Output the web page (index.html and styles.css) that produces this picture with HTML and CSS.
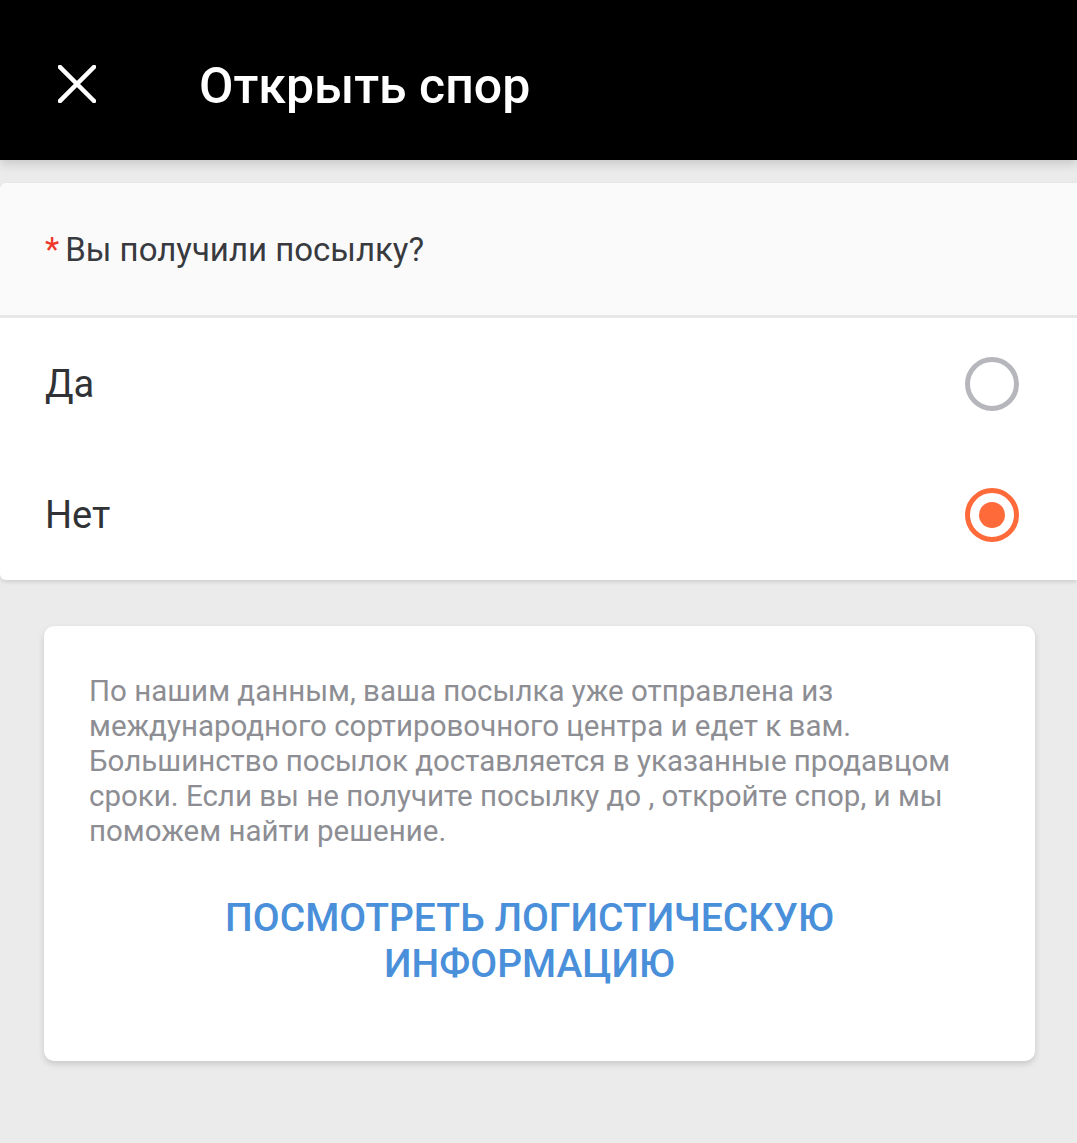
FILE: index.html
```html
<!DOCTYPE html>
<html lang="ru">
<head>
    <meta charset="UTF-8">
    <meta name="viewport" content="width=device-width, initial-scale=1.0">
    <title>Открыть спор</title>
    <link rel="stylesheet" href="styles.css">
</head>
<body>
    <div class="topbar">
        <svg class="close-icon" viewBox="0 0 38 38" width="38" height="38">
            <path d="M2 2 L36 36 M36 2 L2 36" stroke="#ffffff" stroke-width="4.5" stroke-linecap="square" fill="none"/>
        </svg>
        <h1>Открыть спор</h1>
    </div>

    <div class="question-block">
        <div class="question">
            <span class="required">*</span>Вы получили посылку?
        </div>
        <div class="options">
            <label class="option">
                <span>Да</span>
                <span class="radio"></span>
            </label>
            <label class="option">
                <span>Нет</span>
                <span class="radio checked"></span>
            </label>
        </div>
    </div>

    <div class="info-card">
        <p class="info-text">
            По нашим данным, ваша посылка уже отправлена из международного сортировочного центра и едет к вам. Большинство посылок доставляется в указанные продавцом сроки. Если вы не получите посылку до , откройте спор, и мы поможем найти решение.
        </p>
        <a href="#" class="info-link">Посмотреть логистическую информацию</a>
    </div>
</body>
</html>
```

FILE: styles.css
```css
body {
    font-family: Roboto, "Noto Sans", sans-serif;
    background-color: #ebebeb;
    margin: 0;
    min-height: 100vh;
}

.topbar {
    height: 160px;
    background: #000000;
    display: flex;
    align-items: center;
    padding-left: 58px;
    box-shadow: 0 4px 10px rgba(0, 0, 0, 0.15);
    position: relative;
    z-index: 2;
}

.close-icon {
    margin-top: 8px;
}

.topbar h1 {
    color: #ffffff;
    font-size: 50px;
    font-weight: 500;
    margin: 0 0 0 103px;
    padding-top: 12px;
}

.question-block {
    margin-top: 23px;
    background: #ffffff;
    border-radius: 6px 0 0 6px;
    box-shadow: 0 2px 4px rgba(0, 0, 0, 0.12);
    overflow: hidden;
}

.question {
    background: #fafafa;
    height: 132px;
    display: flex;
    align-items: center;
    padding-left: 45px;
    font-size: 33px;
    color: #383a3f;
    border-bottom: 3px solid #e8e8e8;
}

.required {
    color: #f0372b;
    margin-right: 6px;
}

.option {
    height: 131px;
    display: flex;
    align-items: center;
    justify-content: space-between;
    padding: 0 58px 0 45px;
    font-size: 38px;
    color: #303236;
}

.radio {
    width: 44px;
    height: 44px;
    border: 5px solid #b5b7bd;
    border-radius: 50%;
    display: flex;
    align-items: center;
    justify-content: center;
}

.radio.checked {
    border-color: #ff6a3a;
}

.radio.checked::after {
    content: "";
    width: 26px;
    height: 26px;
    border-radius: 50%;
    background: #ff6a3a;
}

.info-card {
    margin: 46px 42px 0 44px;
    background: #ffffff;
    border-radius: 10px;
    box-shadow: 0 3px 6px rgba(0, 0, 0, 0.15);
    padding: 48px 45px 74px;
    text-align: center;
}

.info-text {
    margin: 0;
    text-align: left;
    font-size: 29.5px;
    line-height: 35px;
    color: #8d8e93;
}

.info-link {
    display: block;
    margin-top: 46px;
    color: #4a8fd9;
    text-decoration: none;
    text-transform: uppercase;
    font-size: 39px;
    font-weight: 500;
    line-height: 46px;
    padding: 0 120px 0 100px;
}
```
